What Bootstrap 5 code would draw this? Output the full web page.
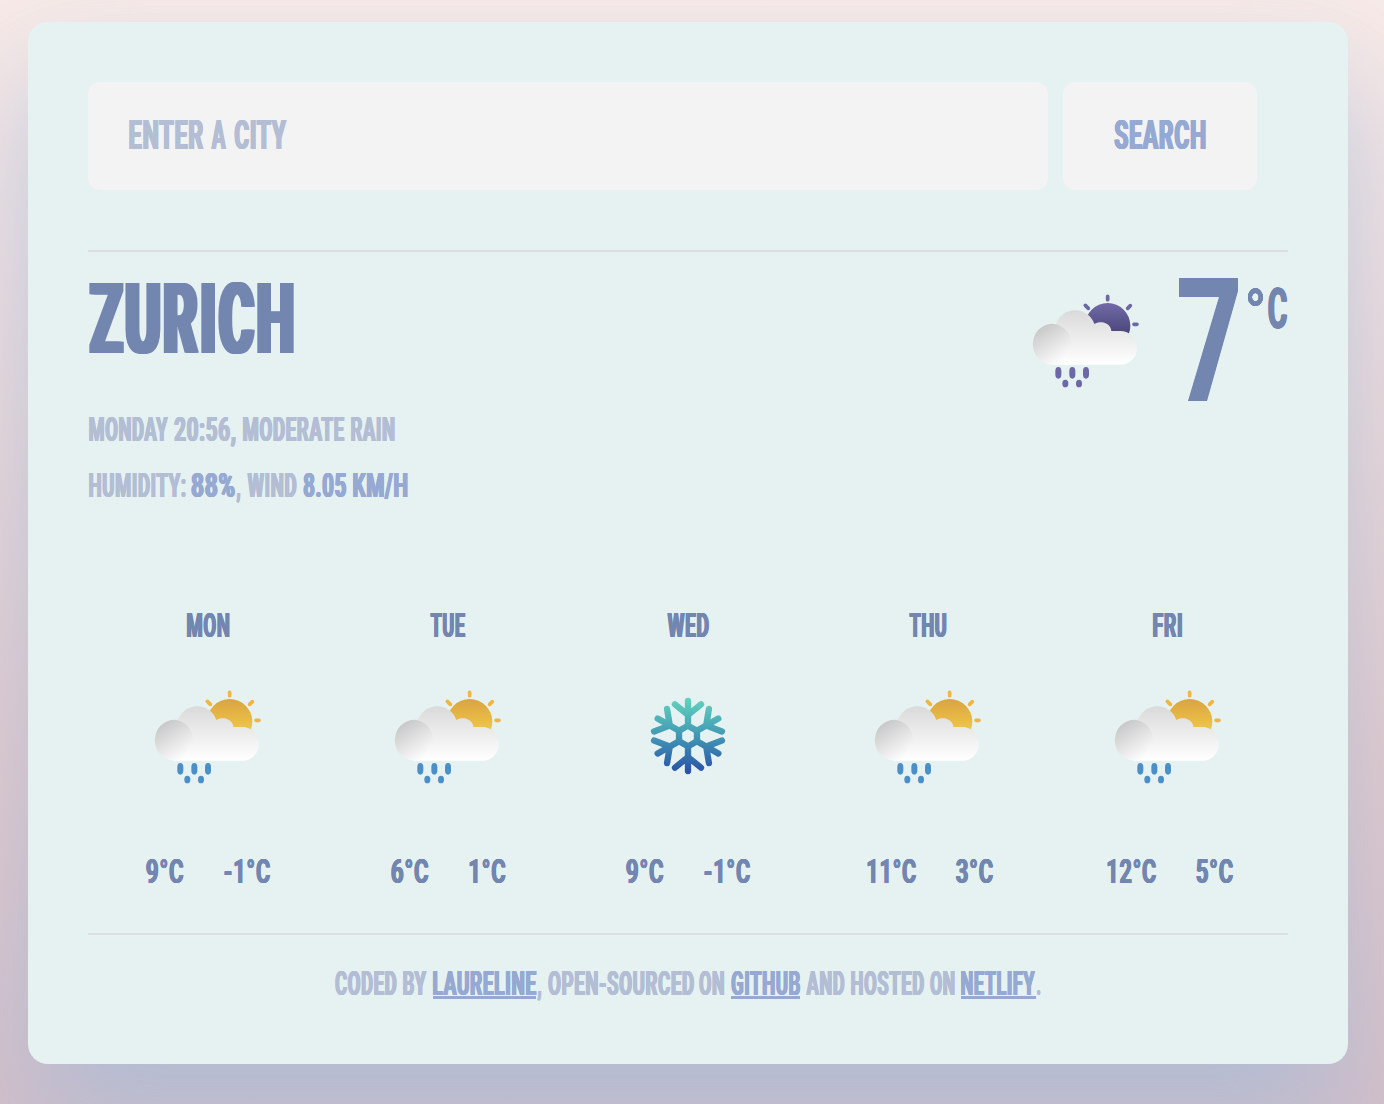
<!DOCTYPE html>
<html lang="en">
<head>
<meta charset="utf-8">
<meta name="viewport" content="width=device-width, initial-scale=1">
<title>Weather</title>
<link href="https://cdn.jsdelivr.net/npm/bootstrap@5.3.0/dist/css/bootstrap.min.css" rel="stylesheet">
<style>
  body { margin: 0; height: 1104px; overflow: hidden; font-family: Roboto, "Liberation Sans", sans-serif; font-weight: 700; color: #7386b0;
    background: linear-gradient(180deg, #f7eae8 0, #e3c8ca 780px, #d5bfc7 1104px); }
  .weather-app { width: 1320px; height: 1042px; margin: 22px 0 0 28px; padding: 60px; border-radius: 20px; background: #e5f2f1;
    box-shadow: 0 60px 110px rgba(152,184,218,.58); }
  .field { width: 960px; height: 108px; }
  .field input { height: 108px; background: #f3f3f3; border: 0; border-radius: 12px; padding: 0 40px; font-size: 40.8px; }
  .field label { left: 40.5px; top: 0; line-height: 106px; font-size: 40.8px; color: #b3bed4; }
  .search { width: 194px; height: 108px; margin-left: 15px; background: #f3f3f3; border: 0; border-radius: 12px; color: #96a9d2; line-height: 106px; font-size: 40.8px; font-weight: 700; padding: 0; }
  .rule { height: 2px; background: #dbdde0; }
  .first-rule { margin-top: 60px; }
  h1 { font-size: 98.5px; line-height: 136px; font-weight: 700; margin: 0 0 13.5px .5px; }
  .text-line { font-size: 32.8px; line-height: 56px; color: #b3bed4; }
  .text-line strong, .text-line a { color: #96a9d2; font-weight: 700; }
  .details { padding-left: .5px; }
  .fit { display: block; flex: none; white-space: nowrap; }
  .fit > span { display: inline-block; transform-origin: 0 50%; letter-spacing: .04em; --b: .038em;
    text-shadow: var(--b) 0 currentColor, calc(var(--b) * -1) 0 currentColor, calc(var(--b) * .5) 0 currentColor, calc(var(--b) * -.5) 0 currentColor; }
  h1 .fit > span { letter-spacing: .065em; --b: .058em; }
  .degrees .fit > span { --b: .01em; }
  .unit .fit > span { --b: .025em; }
  .unit .ring > span { --b: 0em; }
  .temps .fit > span { --b: .024em; }
  a.fit { text-decoration: none; height: 43px; border-bottom: 3px solid #96a9d2; }
  .now { height: 132px; margin-right: .7px; }
  .icon { display: block; width: 126px; height: 115px; filter: blur(.6px); }
  .now .icon { margin-top: 32px; margin-right: 30px; }
  .degrees { font-size: 173.5px; line-height: 180px; }
  .unit { font-size: 55.5px; line-height: 115px; }
  .unit .ring { font-size: 66px; line-height: 124px; }
  .forecast { margin-top: 84.5px; font-size: 32.4px; line-height: 56px; }
  .forecast .icon { margin: 25.5px auto 49.5px; }
  .temps { gap: 40px; }
  .last-rule { margin-top: 32.5px; }
  .credits { margin-top: 21px; }
</style>
<script src="https://cdn.jsdelivr.net/npm/bootstrap@5.3.0/dist/js/bootstrap.bundle.min.js"></script>
</head>
<body>
<svg width="0" height="0" class="position-absolute" aria-hidden="true">
  <defs>
    <linearGradient id="day" x1="0" y1="0" x2="0" y2="1"><stop stop-color="#d9a441"/><stop offset=".65" stop-color="#efc449"/></linearGradient>
    <linearGradient id="night" x1="0" y1="0" x2="0" y2="1"><stop stop-color="#716aa8"/><stop offset=".65" stop-color="#4c477c"/></linearGradient>
    <linearGradient id="cloud" gradientUnits="userSpaceOnUse" x1="0" y1="76" x2="0" y2="242"><stop stop-color="#d9d9d9"/><stop offset="1" stop-color="#ffffff"/></linearGradient>
    <linearGradient id="puff" x1=".2" y1=".05" x2=".72" y2=".95"><stop stop-color="#c6c6c6"/><stop offset="1" stop-color="#fdfdfd"/></linearGradient>
    <linearGradient id="ice" gradientUnits="userSpaceOnUse" x1="0" y1="55" x2="0" y2="282"><stop stop-color="#60d4bc"/><stop offset=".5" stop-color="#4297b5"/><stop offset="1" stop-color="#284fa6"/></linearGradient>
    <g id="rays" stroke-width="11" stroke-linecap="round"><path d="M254 37v10M187 64l9 9M322 65l-8 8M333 121h9"/></g>
    <g id="cloudShape">
      <path fill="url(#cloud)" d="M87 242V150L99 119A61 61 0 0 1 214 120C230 110 262 114 265 141H292A50.500 50.500 0 0 1 292 242Z"/>
      <ellipse cx="87" cy="180.500" rx="57.500" ry="61" fill="url(#puff)"/>
    </g>
    <g id="drops"><rect x="97" y="249" width="18" height="35" rx="9" ry="13"/><rect x="139" y="249" width="18" height="35" rx="9" ry="13"/><rect x="180" y="249" width="18" height="35" rx="9" ry="13"/><rect x="118" y="287" width="18" height="23" rx="9" ry="11"/><rect x="159" y="287" width="18" height="23" rx="9" ry="11"/></g>
    <symbol id="rainDay" viewBox="0 0 378 345"><circle cx="254" cy="125" r="68" fill="url(#day)"/><use href="#rays" stroke="#f2b544"/><use href="#cloudShape"/><use href="#drops" fill="#4a90c6"/></symbol>
    <symbol id="rainNight" viewBox="0 0 378 345"><circle cx="254" cy="125" r="68" fill="url(#night)"/><use href="#rays" stroke="#6e67a6"/><use href="#cloudShape"/><use href="#drops" fill="#6e67a6"/></symbol>
    <path id="arm" d="M0 -31V-105M-39 -95L0 -63L39 -95M0 -31L27 -15.500"/>
    <mask id="flake" maskUnits="userSpaceOnUse" x="0" y="0" width="378" height="345">
      <g transform="translate(189 168)" fill="none" stroke="#fff" stroke-width="19" stroke-linecap="round">
        <use href="#arm"/><use href="#arm" transform="rotate(60)"/><use href="#arm" transform="rotate(120)"/><use href="#arm" transform="rotate(180)"/><use href="#arm" transform="rotate(240)"/><use href="#arm" transform="rotate(300)"/>
      </g>
    </mask>
    <symbol id="snow" viewBox="0 0 378 345"><rect width="378" height="345" fill="url(#ice)" mask="url(#flake)"/></symbol>
  </defs>
</svg>

<main class="weather-app">
  <form class="d-flex">
    <div class="field position-relative">
      <input id="city" class="form-control" type="text" aria-label="City">
      <label for="city" class="position-absolute d-flex"><span class="fit" data-w="75">Enter</span><span class="fit" data-w="15.500" data-g="7.500">A</span><span class="fit" data-w="53" data-g="7.500">City</span></label>
    </div>
    <button type="button" class="search btn d-flex justify-content-center"><span class="fit" data-w="92">Search</span></button>
  </form>
  <div class="rule first-rule"></div>

  <section class="d-flex justify-content-between">
    <div>
      <h1><span class="fit" data-w="205">Zurich</span></h1>
      <div class="details text-line d-flex"><span class="fit" data-w="79.500">Monday</span><span class="fit" data-w="62" data-g="6">20:56,</span><span class="fit" data-w="101.500" data-g="6.500">moderate</span><span class="fit" data-w="44" data-g="6.500">rain</span></div>
      <div class="details text-line d-flex"><span class="fit" data-w="97">Humidity:</span><strong class="fit" data-w="44" data-g="5.500">88%</strong><span class="fit" data-w="4.500" data-g=".500">,</span><span class="fit" data-w="49.500" data-g="6.500">Wind</span><strong class="fit" data-w="43.500" data-g="6.500">8.05</strong><strong class="fit" data-w="55" data-g="6.500">km/h</strong></div>
    </div>
    <div class="now d-flex">
      <svg class="icon"><use href="#rainNight"/></svg>
      <div class="degrees d-flex"><span class="fit" data-w="59.500">7</span></div>
      <div class="unit d-flex"><span class="fit ring" data-w="15.300" data-g="9.500">°</span><span class="fit" data-w="19.300" data-g="4.700">C</span></div>
    </div>
  </section>

  <section class="forecast row row-cols-5 g-0">
    <div class="col"><div class="d-flex justify-content-center"><span class="fit" data-w="42.500">Mon</span></div><svg class="icon"><use href="#rainDay"/></svg><div class="temps d-flex justify-content-center"><span class="fit" data-w="38">9°C</span><span class="fit" data-w="46.500">-1°C</span></div></div>
    <div class="col"><div class="d-flex justify-content-center"><span class="fit" data-w="35.500">Tue</span></div><svg class="icon"><use href="#rainDay"/></svg><div class="temps d-flex justify-content-center"><span class="fit" data-w="38">6°C</span><span class="fit" data-w="37">1°C</span></div></div>
    <div class="col"><div class="d-flex justify-content-center"><span class="fit" data-w="42">Wed</span></div><svg class="icon"><use href="#snow"/></svg><div class="temps d-flex justify-content-center"><span class="fit" data-w="38">9°C</span><span class="fit" data-w="46.500">-1°C</span></div></div>
    <div class="col"><div class="d-flex justify-content-center"><span class="fit" data-w="37.500">Thu</span></div><svg class="icon"><use href="#rainDay"/></svg><div class="temps d-flex justify-content-center ps-1"><span class="fit" data-w="49.500">11°C</span><span class="fit" data-w="37.500">3°C</span></div></div>
    <div class="col"><div class="d-flex justify-content-center"><span class="fit" data-w="29.500">Fri</span></div><svg class="icon"><use href="#rainDay"/></svg><div class="temps d-flex justify-content-center ps-1"><span class="fit" data-w="49.500">12°C</span><span class="fit" data-w="37.500">5°C</span></div></div>
  </section>

  <div class="rule last-rule"></div>
  <footer class="credits text-line d-flex justify-content-center"><span class="fit" data-w="61.500">Coded</span><span class="fit" data-w="24" data-g="6.500">by</span><a href="#" class="fit" data-w="103.500" data-g="5.500">Laureline</a><span class="fit" data-w="4.500" data-g=".500">,</span><span class="fit" data-w="146" data-g="6.500">open-sourced</span><span class="fit" data-w="25.500" data-g="5.500">on</span><a href="#" class="fit" data-w="69.500" data-g="6">GitHub</a><span class="fit" data-w="38.500" data-g="5.500">and</span><span class="fit" data-w="73" data-g="6.500">hosted</span><span class="fit" data-w="25" data-g="6.500">on</span><a href="#" class="fit" data-w="74.500" data-g="6">Netlify</a><span class="fit" data-w="3.500" data-g="1.500">.</span></footer>
</main>

<script>
  // Condense each word so that its ink fills the width given in data-w.
  const pen = document.createElement('canvas').getContext('2d');
  document.querySelectorAll('.fit').forEach(box => {
    const word = document.createElement('span');
    word.textContent = box.textContent.toUpperCase();
    box.replaceChildren(word);
    const style = getComputedStyle(word);
    const size = parseFloat(style.fontSize);
    pen.font = style.fontWeight + ' ' + size + 'px Roboto';
    const m = pen.measureText(word.textContent);
    const extra = parseFloat(style.getPropertyValue('--b')) * size;
    const spacing = parseFloat(style.letterSpacing) * (word.textContent.length - 1);
    const ink = m.actualBoundingBoxRight + m.actualBoundingBoxLeft + spacing + 2 * extra;
    const width = parseFloat(box.dataset.w);
    const k = width / ink;
    box.style.width = width + 'px';
    box.style.marginLeft = (box.dataset.g || 0) + 'px';
    word.style.transform = `translateX(${(m.actualBoundingBoxLeft + extra) * k}px) scaleX(${k})`;
  });
</script>
</body>
</html>
